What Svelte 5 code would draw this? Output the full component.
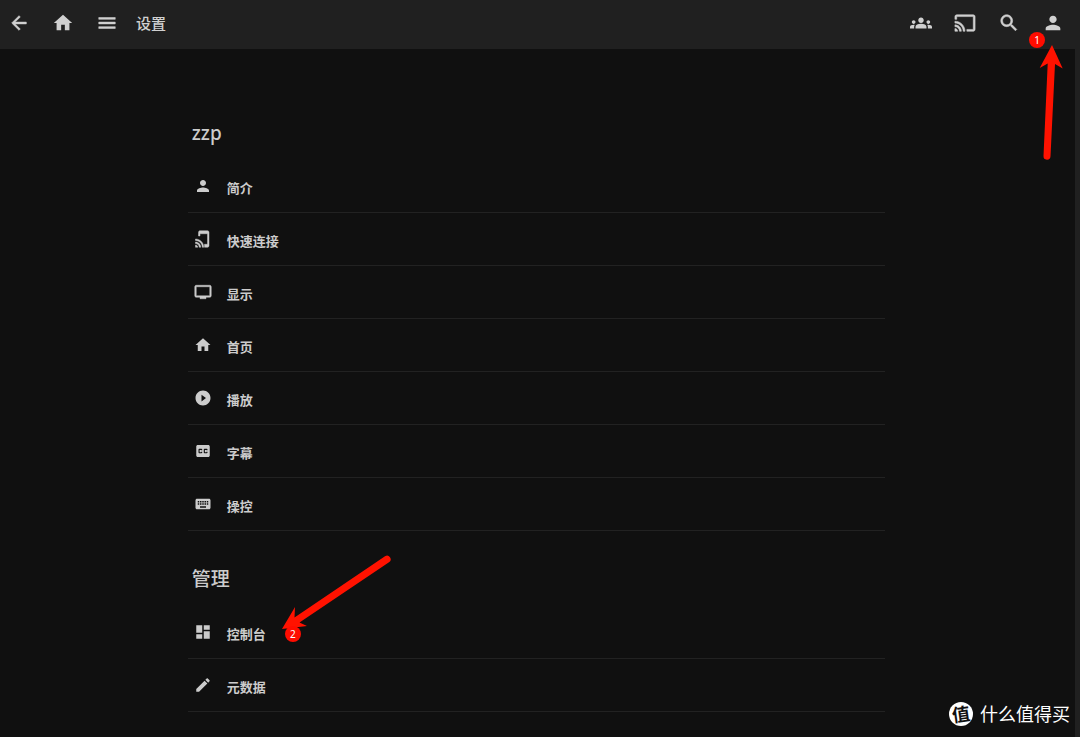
<script lang="ts">
  const icons = {
    back: 'M20 11H7.83l5.59-5.59L12 4l-8 8 8 8 1.41-1.41L7.83 13H20v-2z',
    home: 'M10 20v-6h4v6h5v-8h3L12 3 2 12h3v8z',
    menu: 'M3 18h18v-2H3v2zm0-5h18v-2H3v2zm0-7v2h18V6H3z',
    groups: 'M12 12.75c1.63 0 3.07.39 4.24.9 1.08.48 1.76 1.56 1.76 2.73V18H6v-1.61c0-1.18.68-2.26 1.76-2.73 1.17-.52 2.61-.91 4.24-.91zM4 13c1.1 0 2-.9 2-2s-.9-2-2-2-2 .9-2 2 .9 2 2 2zm1.13 1.1c-.37-.06-.74-.1-1.13-.1-.99 0-1.93.21-2.78.58C.48 14.9 0 15.62 0 16.43V18h4.5v-1.61c0-.83.23-1.61.63-2.29zM20 13c1.1 0 2-.9 2-2s-.9-2-2-2-2 .9-2 2 .9 2 2 2zm4 3.43c0-.81-.48-1.53-1.22-1.85-.85-.37-1.79-.58-2.78-.58-.39 0-.76.04-1.13.1.4.68.63 1.46.63 2.29V18H24v-1.57zM12 6c1.66 0 3 1.34 3 3s-1.34 3-3 3-3-1.34-3-3 1.34-3 3-3z',
    cast: 'M21 3H3c-1.1 0-2 .9-2 2v3h2V5h18v14h-7v2h7c1.1 0 2-.9 2-2V5c0-1.1-.9-2-2-2zM1 18v3h3c0-1.66-1.34-3-3-3zm0-4v2c2.76 0 5 2.24 5 5h2c0-3.87-3.13-7-7-7zm0-4v2c4.97 0 9 4.03 9 9h2c0-6.08-4.93-11-11-11z',
    search: 'M15.5 14h-.79l-.28-.27C15.41 12.59 16 11.11 16 9.5 16 5.91 13.09 3 9.5 3S3 5.91 3 9.5 5.91 16 9.5 16c1.61 0 3.09-.59 4.23-1.57l.27.28v.79l5 4.99L20.49 19l-4.99-5zm-6 0C7.01 14 5 11.99 5 9.5S7.01 5 9.5 5 14 7.01 14 9.5 11.99 14 9.5 14z',
    person: 'M12 12c2.21 0 4-1.79 4-4s-1.79-4-4-4-4 1.79-4 4 1.79 4 4 4zm0 2c-2.67 0-8 1.34-8 4v2h16v-2c0-2.66-5.33-4-8-4z',
    tap: 'M18 1.01L8 1c-1.1 0-2 .9-2 2v5h2V5h10v14h-4v4h4c1.1 0 2-.9 2-2V3c0-1.1-.9-1.99-2-1.99zM2 20v3h3c0-1.66-1.34-3-3-3zm0-4v2c2.76 0 5 2.24 5 5h2c0-3.87-3.13-7-7-7zm0-4v2c4.97 0 9 4.03 9 9h2c0-6.08-4.92-11-11-11z',
    tv: 'M21 3H3c-1.1 0-2 .9-2 2v12c0 1.1.9 2 2 2h5v2h8v-2h5c1.1 0 2-.9 2-2V5c0-1.1-.9-2-2-2zm0 14H3V5h18v12z',
    play: 'M12 2C6.48 2 2 6.48 2 12s4.48 10 10 10 10-4.48 10-10S17.52 2 12 2zm-2 14.5v-9l6 4.5-6 4.5z',
    cc: 'M19 4H5c-1.11 0-2 .9-2 2v12c0 1.1.89 2 2 2h14c1.1 0 2-.9 2-2V6c0-1.1-.9-2-2-2zm-8 7H9.5v-.5h-2v3h2V13H11v1c0 .55-.45 1-1 1H7c-.55 0-1-.45-1-1v-4c0-.55.45-1 1-1h3c.55 0 1 .45 1 1v1zm7 0h-1.5v-.5h-2v3h2V13H18v1c0 .55-.45 1-1 1h-3c-.55 0-1-.45-1-1v-4c0-.55.45-1 1-1h3c.55 0 1 .45 1 1v1z',
    keyboard: 'M20 5H4c-1.1 0-1.99.9-1.99 2L2 17c0 1.1.9 2 2 2h16c1.1 0 2-.9 2-2V7c0-1.1-.9-2-2-2zm-9 3h2v2h-2V8zm0 3h2v2h-2v-2zM8 8h2v2H8V8zm0 3h2v2H8v-2zm-1 2H5v-2h2v2zm0-3H5V8h2v2zm9 7H8v-2h8v2zm0-4h-2v-2h2v2zm0-3h-2V8h2v2zm3 3h-2v-2h2v2zm0-3h-2V8h2v2z',
    dashboard: 'M3 13h8V3H3v10zm0 8h8v-6H3v6zm10 0h8V11h-8v10zm0-18v6h8V3h-8z',
    edit: 'M3 17.25V21h3.75L17.81 9.94l-3.75-3.75L3 17.25zM20.71 7.04c.39-.39.39-1.02 0-1.41l-2.34-2.34c-.39-.39-1.02-.39-1.41 0l-1.83 1.83 3.75 3.75 1.83-1.83z',
  };

  type IconName = keyof typeof icons;
  type Item = { icon: IconName; label: string; step?: number };

  // thin glyphs get a light outline so they read at small sizes
  const outlined: IconName[] = ['back', 'menu', 'cast', 'search', 'tap', 'tv'];

  const left: { icon: IconName; label: string }[] = [
    { icon: 'back', label: '返回' },
    { icon: 'home', label: '首页' },
    { icon: 'menu', label: '菜单' },
  ];
  const right: { icon: IconName; label: string }[] = [
    { icon: 'groups', label: '同步播放' },
    { icon: 'cast', label: '投屏' },
    { icon: 'search', label: '搜索' },
    { icon: 'person', label: '用户' },
  ];
  const sections: { title: string; items: Item[] }[] = [
    {
      title: 'zzp',
      items: [
        { icon: 'person', label: '简介' },
        { icon: 'tap', label: '快速连接' },
        { icon: 'tv', label: '显示' },
        { icon: 'home', label: '首页' },
        { icon: 'play', label: '播放' },
        { icon: 'cc', label: '字幕' },
        { icon: 'keyboard', label: '操控' },
      ],
    },
    {
      title: '管理',
      items: [
        { icon: 'dashboard', label: '控制台', step: 2 },
        { icon: 'edit', label: '元数据' },
      ],
    },
  ];
</script>

{#snippet icon(name: IconName)}
  <svg class="icon" class:outlined={outlined.includes(name)} viewBox="0 0 24 24" aria-hidden="true"><path d={icons[name]} /></svg>
{/snippet}

<div class="page">
  <header>
    <nav>
      {#each left as b}
        <button type="button" aria-label={b.label}>{@render icon(b.icon)}</button>
      {/each}
    </nav>
    <h1>设置</h1>
    <nav>
      {#each right as b}
        <button type="button" aria-label={b.label}>{@render icon(b.icon)}</button>
      {/each}
    </nav>
    <span class="step step-user">1</span>
    <svg class="arrow arrow-user" viewBox="0 0 36 124" aria-hidden="true">
      <path d="M18 5L28.700 28.500 21 24 16.500 116.300A3.500 3.500 0 0 1 9.500 116L13.700 23.500 5.700 28z" />
    </svg>
  </header>

  <div class="content">
    <main>
      {#each sections as s}
        <section>
          <h2>{s.title}</h2>
          <ul>
            {#each s.items as item}
              <li>
                <a href="#/{item.icon}">
                  {@render icon(item.icon)}
                  <span class="label">{item.label}</span>
                </a>
                {#if item.step}
                  <svg class="arrow arrow-item" viewBox="0 0 116 84" aria-hidden="true">
                    <path d="M4 76L17 54 16.500 64.500 107 3.300A3.500 3.500 0 0 1 111 9.300L21.500 69.500 29 73z" />
                  </svg>
                  <span class="step step-item">{item.step}</span>
                {/if}
              </li>
            {/each}
          </ul>
        </section>
      {/each}
    </main>
  </div>

  <div class="scrollbar"></div>
  <div class="watermark">
    <span class="logo"><span>值</span></span>
    <span>什么值得买</span>
  </div>
</div>

<style>
  :global(body) { margin: 0; background: #101010; }
  .page { position: relative; min-height: 100vh; overflow: hidden; background: #101010; color: #ccc; font-family: "Noto Sans", "Noto Sans CJK SC", sans-serif; }
  .icon { display: block; flex: none; fill: currentColor; }
  .outlined { stroke: currentColor; stroke-width: 0.6; }

  header { position: relative; z-index: 1; display: flex; align-items: center; height: 49px; padding: 0 5px 3px 0; box-sizing: border-box; background: #202020; color: #d0d0d0; }
  nav { display: flex; }
  nav:first-child { margin-left: -3px; }
  button { display: flex; align-items: center; justify-content: center; width: 44px; height: 44px; padding: 0; border: 0; background: none; color: inherit; cursor: pointer; }
  button .icon { width: 22px; height: 22px; }
  h1 { flex: 1; margin: 0 0 0 7px; font-size: 15px; line-height: 24px; font-weight: 500; }

  .content { padding: 70px 7px 20px 0; }
  main { width: 65%; margin: 0 auto; }
  h2 { margin: 0 0 12px 4px; font-size: 19px; line-height: 29px; font-weight: 500; }
  section + section { margin-top: 34px; }
  ul { margin: 0; padding: 0; list-style: none; }
  li { position: relative; border-bottom: 1px solid #222; }
  a { display: flex; align-items: center; gap: 15px; height: 52px; padding-left: 6px; color: inherit; text-decoration: none; }
  a .icon { width: 18px; height: 18px; }
  .label { padding-top: 4px; font-size: 13px; line-height: 20px; font-weight: 700; }

  .arrow { position: absolute; fill: #ff1200; pointer-events: none; }
  .arrow-user { top: 40px; right: 10px; width: 36px; height: 124px; }
  .arrow-item { top: -53px; left: 90px; width: 116px; height: 84px; }
  .step { position: absolute; width: 16px; height: 16px; border-radius: 50%; background: #ff0c00; color: #fff; font-size: 10px; line-height: 16px; text-align: center; }
  .step-user { top: 32px; right: 35px; }
  .step-item { top: 20px; left: 97px; }

  .scrollbar { position: absolute; top: 49px; right: 0; bottom: 0; width: 5px; background: #202020; }
  .watermark { position: absolute; right: 10px; bottom: 10px; display: flex; align-items: center; gap: 7px; color: #fff; font-size: 18px; line-height: 26px; }
  .logo { display: flex; align-items: center; justify-content: center; width: 24px; height: 24px; border-radius: 50%; background: #fff; color: #111; font-size: 18px; font-weight: 700; }
  .logo span { transform: rotate(-8deg); }
</style>
